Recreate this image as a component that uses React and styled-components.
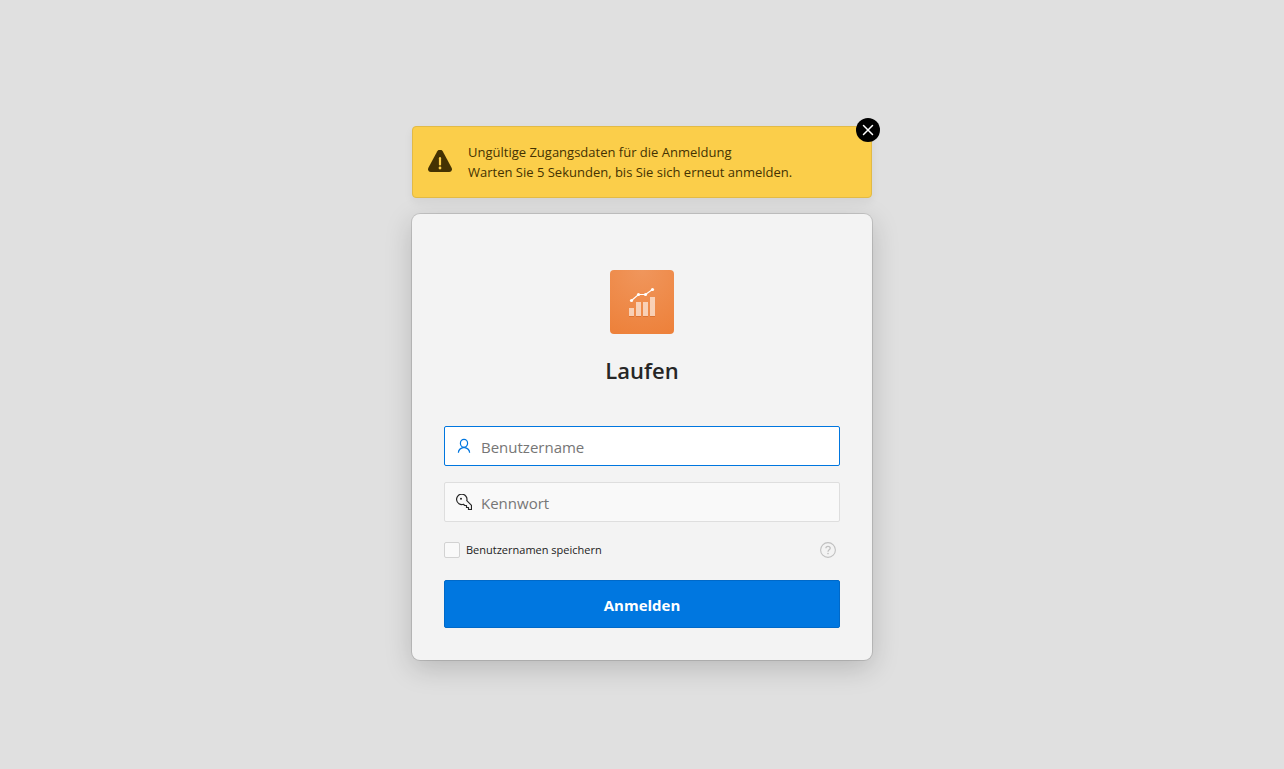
import React from "react";
import styled, { createGlobalStyle, css } from "styled-components";

const GlobalStyle = createGlobalStyle`
  *, *::before, *::after { box-sizing: border-box; }
  body {
    margin: 0;
    background: #e0e0e0;
    color: #1b1b1b;
    font-family: "Segoe UI", "Open Sans", "Noto Sans", sans-serif;
  }
`;

const Page = styled.main`
  min-height: 100vh;
  display: flex;
  flex-direction: column;
  align-items: center;
  justify-content: center;
  padding: 17px 16px 0;
`;

const Stack = styled.div`
  width: 100%;
  max-width: 460px;
  display: flex;
  flex-direction: column;
  gap: 16px;
`;

const Alert = styled.div`
  position: relative;
  display: flex;
  align-items: center;
  gap: 16px;
  padding: 15px;
  border: 1px solid #e2ba46;
  border-radius: 4px;
  background: #fbce4a;
  color: #443202;
  box-shadow: 0 4px 10px rgba(0, 0, 0, 0.06);
`;

const AlertText = styled.p`
  margin: 0;
  font-size: 13px;
  line-height: 20px;
`;

const CloseButton = styled.button`
  position: absolute;
  top: -9px;
  right: -9px;
  width: 24px;
  height: 24px;
  display: grid;
  place-items: center;
  padding: 0;
  border: 0;
  border-radius: 50%;
  background: #000;
  color: #fff;
  cursor: pointer;
`;

const Card = styled.form`
  display: flex;
  flex-direction: column;
  padding: 56px 32px 32px;
  border-radius: 8px;
  background: #f3f3f3;
  box-shadow: 0 0 0 1px rgba(0, 0, 0, 0.12), 0 8px 28px rgba(0, 0, 0, 0.18);
`;

const Logo = styled.div`
  align-self: center;
  width: 64px;
  height: 64px;
  display: grid;
  place-items: center;
  border-radius: 4px;
  background: radial-gradient(circle at 50% 0, #f0965c, #ed8039);
`;

const Title = styled.h1`
  margin: 20px 0 40px;
  font-size: 22px;
  font-weight: 600;
  line-height: 32px;
  text-align: center;
  color: #262626;
`;

const Field = styled.label`
  height: 40px;
  display: flex;
  align-items: center;
  gap: 9px;
  padding: 0 11px;
  margin-bottom: 16px;
  border: 1px solid #dedede;
  border-radius: 2px;
  background: #f9f9f9;
  color: #262626;
  ${({ $active }) => $active && css`
    border-color: #0076df;
    background: #fff;
    color: #0076df;
  `}
`;

const Input = styled.input`
  flex: 1;
  min-width: 0;
  height: 36px;
  padding: 2px 0 0;
  border: 0;
  outline: 0;
  background: transparent;
  color: #262626;
  font: inherit;
  font-size: 15px;
  &::placeholder { color: #767676; opacity: 1; }
`;

const Options = styled.div`
  height: 24px;
  display: flex;
  align-items: center;
  justify-content: space-between;
  padding-right: 4px;
  margin-bottom: 18px;
`;

const Remember = styled.label`
  display: flex;
  align-items: center;
  gap: 6px;
  font-size: 11px;
  line-height: 16px;
`;

const Checkbox = styled.input`
  appearance: none;
  width: 16px;
  height: 16px;
  margin: 0;
  border: 1px solid #d2d2d2;
  border-radius: 2px;
  background: #f9f9f9;
  &:checked { background: #0076df; }
`;

const HelpButton = styled.button`
  width: 16px;
  height: 16px;
  display: grid;
  padding: 0;
  border: 0;
  background: none;
  color: #c0c0c0;
  cursor: pointer;
`;

const Submit = styled.button`
  height: 48px;
  padding: 2px 0 0;
  border: 1px solid #0069c8;
  border-radius: 2px;
  background: #0077e0;
  color: #fff;
  font: inherit;
  font-size: 15px;
  font-weight: 700;
  cursor: pointer;
`;

const WarningIcon = () => (
  <svg width="24" height="24" viewBox="0 0 24 24" aria-hidden="true">
    <path d="M9.300 1.200c1.200-2 4.200-2 5.400 0l8.900 16.600c1 2-.2 4.200-2.400 4.200H2.800c-2.200 0-3.400-2.200-2.400-4.200Z" fill="currentColor" />
    <path d="M12 8.200v6.300" stroke="#fbce4a" strokeWidth="2.200" strokeLinecap="round" />
    <circle cx="12" cy="18" r="1.400" fill="#fbce4a" />
  </svg>
);

const CloseIcon = () => (
  <svg width="12" height="12" viewBox="0 0 12 12" aria-hidden="true">
    <path d="M1.500 1.500l9 9M10.500 1.500l-9 9" stroke="currentColor" strokeWidth="1.500" strokeLinecap="round" />
  </svg>
);

const ChartIcon = () => (
  <svg width="32" height="32" viewBox="0 0 32 32" aria-hidden="true">
    <path d="M3 30.500h5M10 30.500h5M17 30.500h5M24 30.500h5" stroke="#b84e10" strokeOpacity=".35" />
    <path d="M3 22h5v8H3ZM10 16h5v14h-5ZM17 16h5v14h-5ZM24 11h5v19h-5Z" fill="#fff" fillOpacity=".6" />
    <path d="M5.500 14.500l7-6h7l7-5" fill="none" stroke="#fff" strokeWidth="1.200" />
    <g fill="#fff">
      <circle cx="5.500" cy="14.500" r="1.600" />
      <circle cx="12.500" cy="8.500" r="1.600" />
      <circle cx="19.500" cy="8.500" r="1.600" />
      <circle cx="26.500" cy="3.500" r="1.600" />
    </g>
  </svg>
);

const UserIcon = () => (
  <svg width="16" height="16" viewBox="0 0 16 16" fill="none" stroke="currentColor" strokeWidth="1.200" aria-hidden="true">
    <ellipse cx="8" cy="5.300" rx="3.600" ry="4" />
    <path d="M2.400 14.800c0-2.800 2-4.800 5.600-5.500 3.600.7 5.600 2.700 5.600 5.500" />
  </svg>
);

const KeyIcon = () => (
  <svg width="16" height="16" viewBox="0 0 16 16" fill="none" stroke="currentColor" strokeWidth="1.200" strokeLinejoin="round" aria-hidden="true">
    <path d="M10.800 6.700l4.700 4.700v4.100h-3v-2h-2v-2H8.700l-1.300-1.200A5.200 5.200 0 1 1 10.800 6.700Z" />
    <circle cx="5" cy="4.800" r="1" fill="currentColor" stroke="none" />
  </svg>
);

const HelpIcon = () => (
  <svg width="16" height="16" viewBox="0 0 16 16" fill="none" stroke="currentColor" aria-hidden="true">
    <circle cx="8" cy="8" r="7.400" strokeWidth="1.100" />
    <path d="M5.900 6.300c0-2.700 4.300-2.600 4.300-.1C10.200 7.900 8 7.800 8 9.700" strokeWidth="1.300" />
    <circle cx="8" cy="11.600" r=".8" fill="currentColor" stroke="none" />
  </svg>
);

export default function App() {
  return (
    <>
      <GlobalStyle />
      <Page>
        <Stack>
          <Alert role="alert">
            <WarningIcon />
            <AlertText>
              Ungültige Zugangsdaten für die Anmeldung
              <br />
              Warten Sie 5 Sekunden, bis Sie sich erneut anmelden.
            </AlertText>
            <CloseButton type="button" aria-label="Schließen"><CloseIcon /></CloseButton>
          </Alert>
          <Card onSubmit={(event) => event.preventDefault()}>
            <Logo><ChartIcon /></Logo>
            <Title>Laufen</Title>
            <Field $active>
              <UserIcon />
              <Input type="text" placeholder="Benutzername" aria-label="Benutzername" autoComplete="username" />
            </Field>
            <Field>
              <KeyIcon />
              <Input type="password" placeholder="Kennwort" aria-label="Kennwort" autoComplete="current-password" />
            </Field>
            <Options>
              <Remember>
                <Checkbox type="checkbox" />
                Benutzernamen speichern
              </Remember>
              <HelpButton type="button" aria-label="Hilfe"><HelpIcon /></HelpButton>
            </Options>
            <Submit type="submit">Anmelden</Submit>
          </Card>
        </Stack>
      </Page>
    </>
  );
}
